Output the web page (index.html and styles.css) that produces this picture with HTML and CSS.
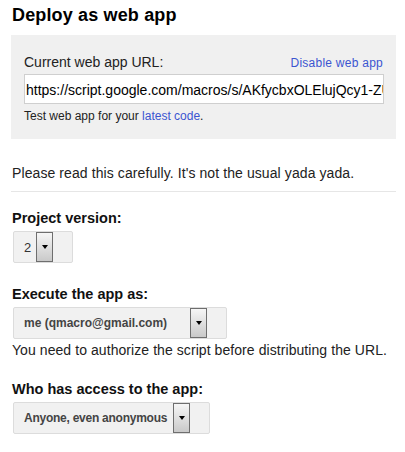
FILE: index.html
```html
<!DOCTYPE html>
<html>
<head>
<meta charset="utf-8">
<link rel="stylesheet" href="styles.css">
</head>
<body>
<h1 class="title">Deploy as web app</h1>
<div class="panel">
  <div class="panel-head">
    <span class="label">Current web app URL:</span>
    <a class="link link-disable">Disable web app</a>
  </div>
  <div class="url-box">https://script.google.com/macros/s/AKfycbxOLElujQcy1-ZUb3xWq9kT</div>
  <div class="hint">Test web app for your <a class="link">latest code</a>.</div>
</div>
<p class="notice">Please read this carefully. It's not the usual yada yada.</p>
<div class="rule"></div>
<div class="field field-first">
  <div class="field-label">Project version:</div>
  <div class="select"><span class="select-text select-text-version">2</span><span class="select-btn"><span class="tri"></span></span></div>
</div>
<div class="field">
  <div class="field-label">Execute the app as:</div>
  <div class="select"><span class="select-text select-text-exec">me (qmacro@gmail.com)</span><span class="select-btn"><span class="tri"></span></span></div>
  <div class="field-note">You need to authorize the script before distributing the URL.</div>
</div>
<div class="field">
  <div class="field-label">Who has access to the app:</div>
  <div class="select"><span class="select-text select-text-access">Anyone, even anonymous</span><span class="select-btn"><span class="tri"></span></span></div>
</div>
</body>
</html>
```

FILE: styles.css
```css
html, body {
  margin: 0;
  padding: 0;
  background: #ffffff;
}
body {
  padding: 0 9px 0 11px;
  font-family: "Liberation Sans", Arial, sans-serif;
  color: #111;
}
.title {
  margin: 5px 0 9px 1px;
  font-size: 18px;
  line-height: 21px;
  font-weight: bold;
  color: #000;
  letter-spacing: 0.15px;
}
.panel {
  background: #f0f0f0;
  padding: 19px 12px 16px 13px;
}
.panel-head {
  display: flex;
  justify-content: space-between;
  align-items: baseline;
  line-height: 16px;
}
.label {
  font-size: 14px;
  color: #222;
}
.link {
  color: #3b55d0;
  text-decoration: none;
}
.link-disable {
  font-size: 12px;
  letter-spacing: 0.25px;
  margin-right: 1px;
}
.url-box {
  margin-top: 3px;
  height: 30px;
  box-sizing: border-box;
  border: 1px solid #cfcfcf;
  background: #fff;
  font-size: 14px;
  line-height: 16px;
  padding: 7px 0 0 1px;
  white-space: nowrap;
  overflow: hidden;
  color: #000;
}
.hint {
  margin-top: 5px;
  font-size: 12px;
  line-height: 14px;
  color: #222;
}
.notice {
  margin: 26px 0 0 1px;
  font-size: 14px;
  line-height: 16px;
  color: #222;
  letter-spacing: 0.09px;
}
.rule {
  margin-top: 10px;
  height: 1px;
  background: #e6e6e6;
}
.field {
  margin-top: 23px;
}
.field-first {
  margin-top: 18px;
}
.field-label {
  margin-left: 1px;
  font-size: 14.5px;
  line-height: 17px;
  font-weight: bold;
  color: #111;
}
.select {
  display: inline-flex;
  align-items: stretch;
  margin: 4px 0 0 2px;
  height: 32px;
  box-sizing: border-box;
  border: 1px solid #dcdcdc;
  border-radius: 2px;
  background: #f1f1f1;
  padding: 0 19px 0 10px;
  vertical-align: top;
}
.select-text {
  display: flex;
  align-items: center;
  font-size: 12px;
  font-weight: bold;
  color: #444;
  white-space: nowrap;
}
.select-text-version {
  width: 12px;
  font-weight: normal;
  font-size: 13px;
  color: #333;
}
.select-text-exec {
  width: 166px;
}
.select-text-access {
  width: 149px;
  letter-spacing: -0.25px;
}
.select-btn {
  width: 17px;
  box-sizing: border-box;
  border: 1px solid #6e6e6e;
  background: linear-gradient(#f6f6f6, #c9c9c9);
  display: flex;
  justify-content: center;
  align-items: center;
}
.tri {
  width: 0;
  height: 0;
  border-left: 3.5px solid transparent;
  border-right: 3.5px solid transparent;
  border-top: 4px solid #000;
  margin-top: -1px;
}
.field-note {
  margin: 3px 0 0 1px;
  font-size: 14px;
  line-height: 16px;
  color: #222;
  letter-spacing: 0.07px;
}
```
